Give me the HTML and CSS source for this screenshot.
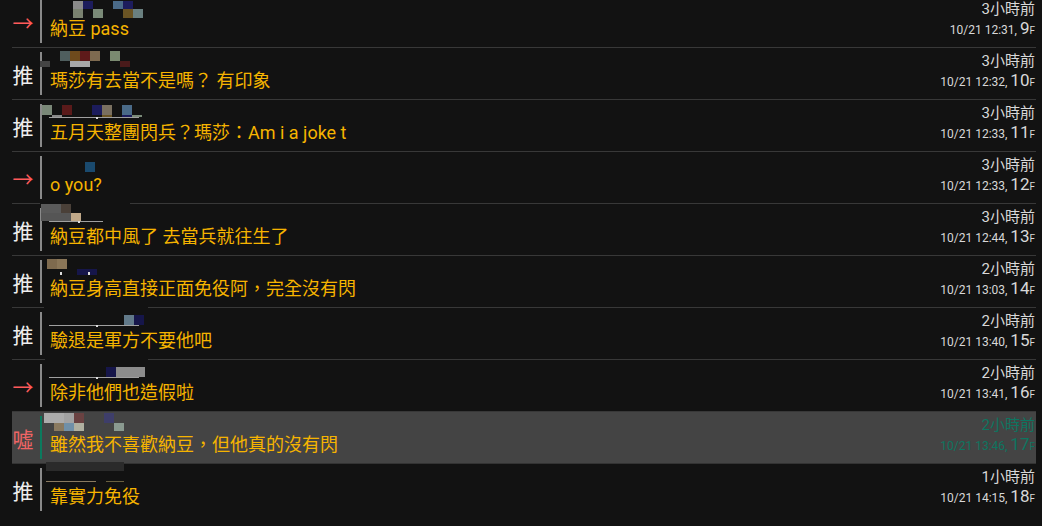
FILE: index.html
```html
<!DOCTYPE html>
<html lang="zh-Hant">
<head>
<meta charset="utf-8">
<title>推文</title>
<link rel="stylesheet" href="styles.css">
</head>
<body>
<div class="list">
  <div class="row">
    <div class="tag arrow">→</div>
    <div class="bar"></div>
    <div class="body">
      <svg class="user" viewBox="0 0 110 22" width="110" height="22">
        <rect x="31" y="5" width="10" height="8" fill="#8a8a8a"/><rect x="41" y="5" width="10" height="8" fill="#1c1c5c"/>
        <rect x="31" y="13" width="10" height="9" fill="#7a8270"/><rect x="51" y="13" width="10" height="9" fill="#7a8a78"/>
        <rect x="71" y="5" width="10" height="8" fill="#4a6a88"/><rect x="81" y="5" width="10" height="8" fill="#1c1c5c"/>
        <rect x="81" y="13" width="10" height="9" fill="#6a5424"/><rect x="91" y="13" width="10" height="9" fill="#6a8080"/>
      </svg>
      <div class="text">納豆 pass</div>
    </div>
    <div class="meta"><div class="ago">3小時前</div><div class="date">10/21 12:31, <span class="floor">9</span><span class="f">F</span></div></div>
  </div>

  <div class="row">
    <div class="tag">推</div>
    <div class="bar"></div>
    <div class="body">
      <svg class="user" viewBox="0 0 110 22" width="110" height="22">
        <rect x="18" y="3" width="10" height="10" fill="#4f5e5e"/><rect x="28" y="3" width="10" height="10" fill="#6e4a1c"/>
        <rect x="38" y="3" width="10" height="10" fill="#5e1a1a"/><rect x="48" y="3" width="10" height="10" fill="#7e6a50"/>
        <rect x="68" y="3" width="10" height="10" fill="#7a8a70"/>
        <rect x="-2" y="13" width="10" height="6" fill="#444"/><rect x="28" y="13" width="20" height="6" fill="#a8a8a8"/>
        <rect x="78" y="13" width="10" height="6" fill="#4a1a1a"/>
      </svg>
      <div class="text">瑪莎有去當不是嗎？ 有印象</div>
    </div>
    <div class="meta"><div class="ago">3小時前</div><div class="date">10/21 12:32, <span class="floor">10</span><span class="f">F</span></div></div>
  </div>

  <div class="row">
    <div class="tag">推</div>
    <div class="bar"></div>
    <div class="body">
      <svg class="user" viewBox="0 0 110 22" width="110" height="22">
        <rect x="0" y="5" width="10" height="10" fill="#7a8878"/><rect x="20" y="5" width="10" height="10" fill="#5a1a1a"/>
        <rect x="50" y="5" width="10" height="10" fill="#1c1c5c"/><rect x="60" y="5" width="10" height="10" fill="#7a7060"/>
        <rect x="80" y="5" width="10" height="10" fill="#4a6a88"/>
        <rect x="10" y="15" width="10" height="2" fill="#888"/><rect x="60" y="15" width="10" height="2" fill="#6a5424"/>
        <rect x="80" y="15" width="10" height="2" fill="#1c1c5c"/><rect x="90" y="15" width="10" height="2" fill="#7a8a78"/>
        <rect x="7" y="17" width="90" height="1" fill="#a0a0a0"/><rect x="54" y="17" width="2" height="2" fill="#ddd"/>
      </svg>
      <div class="text">五月天整團閃兵？瑪莎：Am i a joke t</div>
    </div>
    <div class="meta"><div class="ago">3小時前</div><div class="date">10/21 12:33, <span class="floor">11</span><span class="f">F</span></div></div>
  </div>

  <div class="row">
    <div class="tag arrow">→</div>
    <div class="bar"></div>
    <div class="body">
      <svg class="user" viewBox="0 0 110 22" width="110" height="22">
        <rect x="43" y="10" width="10" height="10" fill="#1a4a6e"/>
      </svg>
      <div class="text">o you?</div>
    </div>
    <div class="meta"><div class="ago">3小時前</div><div class="date">10/21 12:33, <span class="floor">12</span><span class="f">F</span></div></div>
  </div>

  <div class="row">
    <div class="tag">推</div>
    <div class="bar"></div>
    <div class="body">
      <svg class="user" viewBox="0 0 110 22" width="110" height="22">
        <rect x="-2" y="-1" width="90" height="1" fill="#121212"/>
        <rect x="-1" y="0" width="20" height="9" fill="#5a5a5a"/><rect x="19" y="0" width="10" height="9" fill="#4a4038"/>
        <rect x="-1" y="9" width="30" height="8" fill="#555"/><rect x="29" y="9" width="10" height="8" fill="#c0a888"/>
        <rect x="7" y="17" width="54" height="1" fill="#a0a0a0"/><rect x="36" y="17" width="2" height="2" fill="#ddd"/>
      </svg>
      <div class="text">納豆都中風了 去當兵就往生了</div>
    </div>
    <div class="meta"><div class="ago">3小時前</div><div class="date">10/21 12:44, <span class="floor">13</span><span class="f">F</span></div></div>
  </div>

  <div class="row">
    <div class="tag">推</div>
    <div class="bar"></div>
    <div class="body">
      <svg class="user" viewBox="0 0 110 22" width="110" height="22">
        <rect x="5" y="3" width="10" height="10" fill="#7e6a4e"/><rect x="15" y="3" width="10" height="10" fill="#8a7658"/>
        <rect x="35" y="13" width="20" height="6" fill="#16164a"/>
        <rect x="18" y="16" width="2" height="3" fill="#ddd"/><rect x="46" y="16" width="2" height="3" fill="#ddd"/>
      </svg>
      <div class="text">納豆身高直接正面免役阿，完全沒有閃</div>
    </div>
    <div class="meta"><div class="ago">2小時前</div><div class="date">10/21 13:03, <span class="floor">14</span><span class="f">F</span></div></div>
  </div>

  <div class="row">
    <div class="tag">推</div>
    <div class="bar"></div>
    <div class="body">
      <svg class="user" viewBox="0 0 110 22" width="110" height="22">
        <rect x="2" y="-1" width="104" height="1" fill="#121212"/>
        <rect x="82" y="7" width="10" height="10" fill="#627a8a"/><rect x="92" y="7" width="10" height="10" fill="#16164a"/>
        <rect x="7" y="17" width="90" height="1" fill="#a0a0a0"/><rect x="54" y="17" width="2" height="2" fill="#ddd"/>
      </svg>
      <div class="text">驗退是軍方不要他吧</div>
    </div>
    <div class="meta"><div class="ago">2小時前</div><div class="date">10/21 13:40, <span class="floor">15</span><span class="f">F</span></div></div>
  </div>

  <div class="row">
    <div class="tag arrow">→</div>
    <div class="bar"></div>
    <div class="body">
      <svg class="user" viewBox="0 0 110 22" width="110" height="22">
        <rect x="3" y="-1" width="103" height="1" fill="#121212"/>
        <rect x="64" y="7" width="10" height="10" fill="#16164a"/><rect x="74" y="7" width="29" height="10" fill="#8c8c8c"/>
        <rect x="7" y="17" width="90" height="1" fill="#a0a0a0"/><rect x="54" y="17" width="2" height="2" fill="#ddd"/>
      </svg>
      <div class="text">除非他們也造假啦</div>
    </div>
    <div class="meta"><div class="ago">2小時前</div><div class="date">10/21 13:41, <span class="floor">16</span><span class="f">F</span></div></div>
  </div>

  <div class="row hl">
    <div class="tag boo">噓</div>
    <div class="bar"></div>
    <div class="body">
      <svg class="user" viewBox="0 0 110 22" width="110" height="22">
        <rect x="2" y="1" width="20" height="10" fill="#acacac"/><rect x="22" y="1" width="10" height="10" fill="#a2a2a2"/>
        <rect x="32" y="1" width="10" height="10" fill="#6a4242"/><rect x="62" y="1" width="10" height="10" fill="#3e3e6a"/>
        <rect x="12" y="11" width="10" height="8" fill="#8a7a60"/><rect x="22" y="11" width="10" height="8" fill="#7090a8"/>
        <rect x="32" y="11" width="10" height="8" fill="#b0b0a0"/><rect x="72" y="11" width="10" height="8" fill="#8a9a90"/>
      </svg>
      <div class="text">雖然我不喜歡納豆，但他真的沒有閃</div>
    </div>
    <div class="meta"><div class="ago">2小時前</div><div class="date">10/21 13:46, <span class="floor">17</span><span class="f">F</span></div></div>
  </div>

  <div class="row last">
    <div class="tag">推</div>
    <div class="bar"></div>
    <div class="body">
      <svg class="user" viewBox="0 0 110 22" width="110" height="22">
        <rect x="4" y="-2" width="78" height="9" fill="#2b2b2b"/>
        <rect x="4" y="17" width="50" height="1" fill="#8a7a60"/><rect x="64" y="17" width="18" height="1" fill="#6a6040"/>
      </svg>
      <div class="text">靠實力免役</div>
    </div>
    <div class="meta"><div class="ago">1小時前</div><div class="date">10/21 14:15, <span class="floor">18</span><span class="f">F</span></div></div>
  </div>
</div>
</body>
</html>
```

FILE: styles.css
```css
html, body {
  margin: 0;
  background: #121212;
  overflow: hidden;
}

body {
  font-family: Roboto, "Noto Sans CJK TC", sans-serif;
}

.list {
  margin: -4px 0 0 12px;
  width: 1024px;
}

.row {
  display: flex;
  height: 51px;
  border-bottom: 1px solid #383838;
}

.row.last {
  border-bottom-color: transparent;
}

.row.hl {
  background: #444444;
  border-bottom-color: #333333;
}

.tag {
  width: 22px;
  flex: none;
  display: flex;
  align-items: center;
  justify-content: center;
  font-family: "Noto Sans CJK TC", sans-serif;
  font-size: 21px;
  color: #eeeeee;
}

.tag.arrow {
  color: #ff5a5a;
}

.tag.boo {
  color: #f06464;
}

.bar {
  flex: none;
  width: 2px;
  margin: 4px 0 4px 6px;
  background: #8a8a8a;
}

.hl .bar {
  background: #0b7a5e;
}

.body {
  flex: 1;
  min-width: 0;
  display: flex;
  flex-direction: column;
}

.user {
  display: block;
  overflow: visible;
}

.text {
  margin-left: 8px;
  font-size: 18px;
  line-height: 22px;
  color: #f6b400;
  white-space: nowrap;
}

.meta {
  flex: none;
  padding-right: 1px;
  text-align: right;
  color: #d8d8d8;
}

.hl .meta {
  color: #0e7560;
}

.ago {
  margin-top: 3px;
  font-size: 15px;
  line-height: 20px;
}

.date {
  font-size: 12px;
  line-height: 18px;
}

.floor {
  font-size: 17px;
}

.f {
  font-size: 10px;
}
```
